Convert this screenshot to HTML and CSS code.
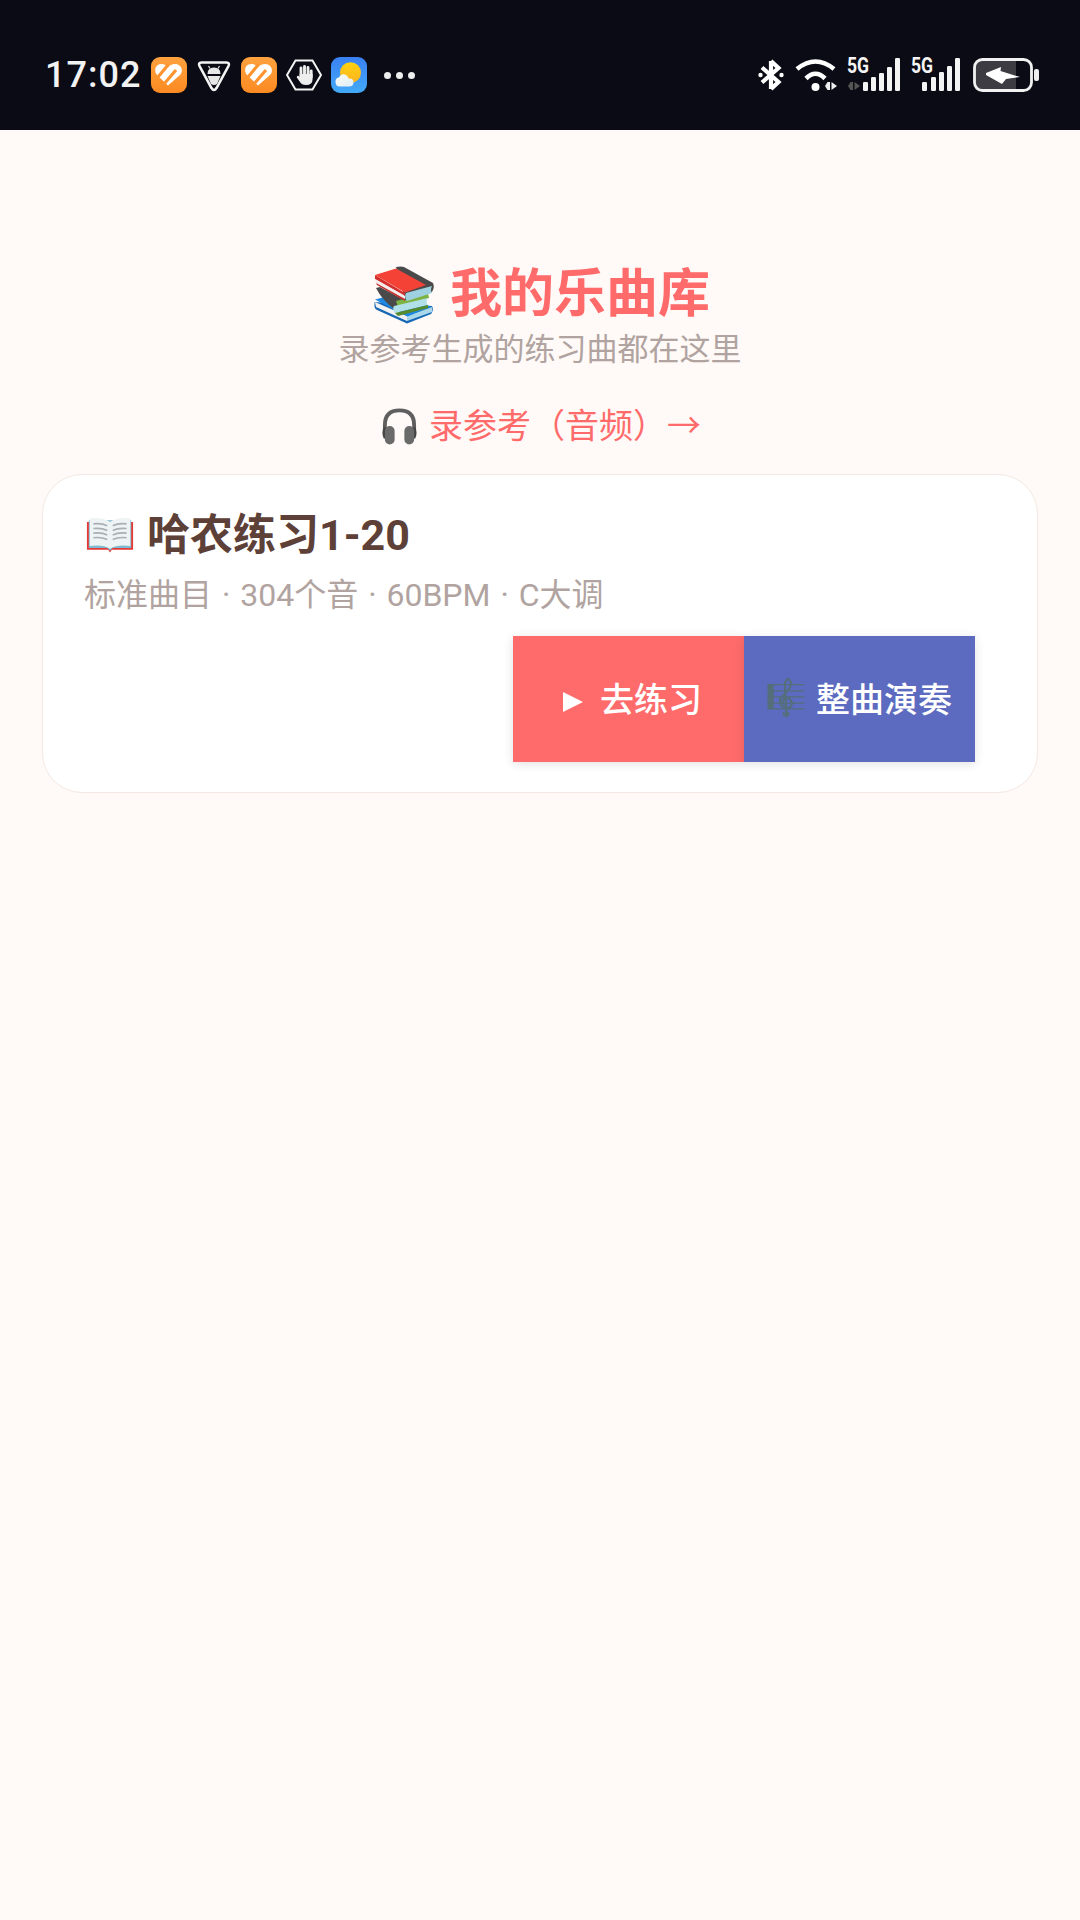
FILE: index.html
```html
<!DOCTYPE html>
<html lang="zh-CN">
<head>
  <meta charset="UTF-8" />
  <meta name="viewport" content="width=device-width, initial-scale=1" />
  <title>我的乐曲库</title>
  <link rel="stylesheet" href="styles.css">
</head>
<body>
  <div class="statusbar">
    <div class="status-left">
      <span class="clock">17:02</span>
      <svg class="app-icon" viewBox="0 0 36 36">
        <defs>
          <linearGradient id="orange" x1="0" y1="0" x2="0" y2="1"><stop offset="0" stop-color="#ffa23f"/><stop offset="1" stop-color="#fb8a22"/></linearGradient>
        </defs>
        <rect width="36" height="36" rx="9" fill="url(#orange)"/>
        <path d="M17 28.500 L6 18 C2.500 14 4 7 10.500 7 C13.500 7 15.500 8.500 17 10.500 C18.500 8.500 21 7 24 7 C30.500 7 33 14 29 18 Z" fill="#fff"/>
        <path d="M7 20 L17 8 M13 27 L25 13" stroke="#fd9430" stroke-width="3.200" fill="none"/>
      </svg>
      <svg class="app-icon" viewBox="0 0 36 36">
        <path d="M5.500 5.500 H30.500 Q34 5.500 32.500 9 L20.500 31 Q18 35 15.500 31 L3.500 9 Q2 5.500 5.500 5.500 Z" fill="none" stroke="#f4f4f4" stroke-width="2.600"/>
        <path d="M11.500 17 Q11.500 10.500 18 10.500 Q24.500 10.500 24.500 17 Z" fill="#e8e8e8"/>
        <path d="M14 11.500 L12.500 9 M22 11.500 L23.500 9" stroke="#e8e8e8" stroke-width="1.200"/>
        <path d="M11.500 19 H24.500 L21 27 Q18 29 15 27 Z" fill="#e8e8e8"/>
      </svg>
      <svg class="app-icon" viewBox="0 0 36 36">
        <rect width="36" height="36" rx="9" fill="url(#orange)"/>
        <path d="M17 28.500 L6 18 C2.500 14 4 7 10.500 7 C13.500 7 15.500 8.500 17 10.500 C18.500 8.500 21 7 24 7 C30.500 7 33 14 29 18 Z" fill="#fff"/>
        <path d="M7 20 L17 8 M13 27 L25 13" stroke="#fd9430" stroke-width="3.200" fill="none"/>
      </svg>
      <svg class="app-icon" viewBox="0 0 36 36">
        <path d="M9.500 3.500 H26.500 L35 18 L26.500 32.500 H9.500 L1 18 Z" fill="none" stroke="#f4f4f4" stroke-width="2"/>
        <path d="M15 19 V11 M18.500 19 V9.500 M22 19 V10.500 M25.200 20 V14" stroke="#eee" stroke-width="2.900" stroke-linecap="round" fill="none"/>
        <path d="M13.600 17 H26.600 V22 Q26.600 28 20 28 Q15.500 28 14 25 L10.800 20.500 Q10.500 18.800 12 18.800 Q13 18.800 13.600 20 Z" fill="#eee"/>
      </svg>
      <svg class="app-icon" viewBox="0 0 36 36">
        <defs>
          <linearGradient id="sky" x1="0" y1="0" x2="0" y2="1"><stop offset="0" stop-color="#3a80f3"/><stop offset="1" stop-color="#43aaf8"/></linearGradient>
          <linearGradient id="sun" x1="0" y1="0" x2="0" y2="1"><stop offset="0" stop-color="#ffd20f"/><stop offset="1" stop-color="#fcb322"/></linearGradient>
          <linearGradient id="cloud" x1="0" y1="0" x2="1" y2="1"><stop offset="0" stop-color="#fbfbf0"/><stop offset="1" stop-color="#dfeefa"/></linearGradient>
        </defs>
        <rect width="36" height="36" rx="9" fill="url(#sky)"/>
        <circle cx="19.500" cy="15.700" r="10.500" fill="url(#sun)"/>
        <path d="M9 29.500 Q4 29.500 4.500 24 Q5 20.500 8 20.500 Q10 16.500 14 17.500 Q17 18.500 17.500 21.500 Q22.500 21 22.500 25.500 Q22.500 29.500 18 29.500 Z" fill="url(#cloud)"/>
      </svg>
      <span class="more"><i></i><i></i><i></i></span>
    </div>
    <div class="status-right">
      <svg class="ic-bt" viewBox="0 0 26 34">
        <path d="M13 3 L20.500 10 L4 24.500 M13 31 L20.500 24 L4 9.500 M13 3 V31" fill="none" stroke="#fff" stroke-width="4.200"/>
        <circle cx="2.500" cy="17" r="2.200" fill="#fff"/>
        <circle cx="23.500" cy="17" r="2.200" fill="#fff"/>
      </svg>
      <svg class="ic-wifi" viewBox="0 0 42 34">
        <path d="M2 11 Q20.500 -4 39 11" fill="none" stroke="#fff" stroke-width="4.600"/>
        <path d="M11 20.500 Q20.500 11 30 20.500" fill="none" stroke="#fff" stroke-width="4.600"/>
        <circle cx="20.500" cy="29" r="4" fill="#fff"/>
        <path d="M32.500 24 V32 H35 V24 Z M36.500 24 V32 L42 28 Z M30 28 L32.500 24 V32 Z" fill="#eee"/>
      </svg>
      <span class="signal">
        <b class="net">5G</b>
        <svg viewBox="0 0 54 34">
          <path d="M4.500 24 V32 H7 V24 Z M8.500 24 V32 L14 28 Z M2 28 L4.500 24 V32 Z" fill="#555"/>
          <rect x="17" y="24" width="5" height="9" rx="1.200" fill="#f4f4f4"/>
          <rect x="25" y="19" width="5" height="14" rx="1.200" fill="#f4f4f4"/>
          <rect x="33" y="15" width="5" height="18" rx="1.200" fill="#f4f4f4"/>
          <rect x="41" y="9" width="5" height="24" rx="1.200" fill="#f4f4f4"/>
          <rect x="49" y="0" width="5" height="33" rx="1.200" fill="#f4f4f4"/>
        </svg>
      </span>
      <span class="signal signal-two">
        <b class="net">5G</b>
        <svg viewBox="0 0 50 34">
          <rect x="12" y="24" width="5" height="9" rx="1.200" fill="#f4f4f4"/>
          <rect x="21" y="19" width="5" height="14" rx="1.200" fill="#f4f4f4"/>
          <rect x="29" y="14" width="5" height="19" rx="1.200" fill="#f4f4f4"/>
          <rect x="37" y="8" width="5" height="25" rx="1.200" fill="#f4f4f4"/>
          <rect x="45" y="0" width="5" height="33" rx="1.200" fill="#f4f4f4"/>
        </svg>
      </span>
      <svg class="ic-batt" viewBox="0 0 66 34">
        <rect x="1.500" y="1.500" width="57" height="31" rx="8" fill="#3c3c42"/>
        <path d="M43 1.500 H50 Q58.500 1.500 58.500 10 V24 Q58.500 32.500 50 32.500 H43 Z" fill="#0a0b14"/>
        <rect x="1.500" y="1.500" width="57" height="31" rx="8" fill="none" stroke="#f1f1f1" stroke-width="2.800"/>
        <rect x="61" y="11" width="5" height="12" rx="2" fill="#eee"/>
        <path d="M13 15 L28 9 L27.500 13 L47 19 L33 21 L29 26 L13 17 Z" fill="#fff"/>
      </svg>
    </div>
  </div>

  <main class="page">
    <header class="page-head">
      <h1 class="page-title">
        <svg class="emoji-books" viewBox="0 0 60 58">
          <path d="M0.500 36 V41 Q1 43 3 44 L33 57.500 L57 48 Q60 44 58 40 Z" fill="#1668b5"/>
          <path d="M1 36 L33 50 V55 L2 41 Z" fill="#f1f1f1"/>
          <path d="M33 50 L58 41 V46 L33 55 Z" fill="#a8d8ea"/>
          <path d="M1 33.500 L14.500 30 L57.500 40.500 L33.500 50.500 Z" fill="#1e88e5"/>
          <path d="M2 22 L6 21 L32 35 L20 43 Q8 34 2 22 Z" fill="#4a4a4a"/>
          <path d="M22 35 L54 27 L55 32 L24 41 Z" fill="#7cb342"/>
          <path d="M20 40 L54 32 Q51 36 54 39 L21 47 Q18 43 20 40 Z" fill="#b2e0e8"/>
          <path d="M21 47 L54 39 V42 L24 50 Z" fill="#558b2f"/>
          <path d="M22 1 Q27 0 30 1 L59 17 Q61 22 58 26 L31 34 L26 14 Z" fill="#4a4a4a"/>
          <path d="M32 27 L58 20 Q56 24 58 27 L33 35 Q30 31 32 27 Z" fill="#9fd0df"/>
          <path d="M1 9 L31 27 V30 L1 13 Z" fill="#d32f2f"/>
          <path d="M1 13 L31 30 V33 L2 17 Z" fill="#f1eded"/>
          <path d="M2 17 L31 33 V35 L3 19 Z" fill="#c62828"/>
          <path d="M1 9 L22 2.500 L52 19 L31 26.500 Z" fill="#f44336"/>
        </svg>
        <span>我的乐曲库</span>
      </h1>
      <p class="page-sub">录参考生成的练习曲都在这里</p>
      <a class="record-link" href="#">
        <svg class="emoji-phones" viewBox="0 0 38 38">
          <path d="M4 24 V18 Q4 3 19 3 Q34 3 34 18 V24" fill="none" stroke="#5f5f5f" stroke-width="4"/>
          <path d="M3 20 Q0 26 3 32 L6 31 V21 Z M35 20 Q38 26 35 32 L32 31 V21 Z" fill="#444"/>
          <rect x="4" y="19" width="10" height="19" rx="5" fill="#6a6a6a"/>
          <rect x="24" y="19" width="10" height="19" rx="5" fill="#6a6a6a"/>
        </svg>
        <span>录参考（音频）→</span>
      </a>
    </header>

    <section class="song-card">
      <h2 class="song-title">
        <svg class="emoji-book" viewBox="0 0 52 38">
          <path d="M1 5 V35 L24 35 L26 38 L28 35 L51 35 V5 Z" fill="#e53935"/>
          <path d="M3 3 V33 H23 L26 36 L29 33 H49 V3 Z" fill="#7fb9cf"/>
          <path d="M4 1 Q18 -1 26 5 Q34 -1 48 1 V31 Q34 29 26 34 Q18 29 4 31 Z" fill="#eef3f4"/>
          <path d="M8 7 Q17 6 23 9 M8 12 Q17 11 23 14 M8 17 Q17 16 23 19 M8 22 Q17 21 23 24 M44 7 Q35 6 29 9 M44 12 Q35 11 29 14 M44 17 Q35 16 29 19 M44 22 Q35 21 29 24" fill="none" stroke="#a9afb2" stroke-width="1.800"/>
        </svg>
        <span>哈农练习1-20</span>
      </h2>
      <p class="song-meta">标准曲目 · 304个音 · 60BPM · C大调</p>
      <div class="song-actions">
        <button class="btn btn-practice"><svg class="ic-play" viewBox="0 0 20 20"><path d="M0 0 L20 10 L0 20 Z" fill="#fff"/></svg>去练习</button>
        <button class="btn btn-play">
          <svg class="emoji-score" viewBox="0 0 36 38">
            <rect x="0" y="6" width="6" height="24" fill="#546e7a"/>
            <path d="M0 6.500 H36 M0 12.500 H36 M0 18.500 H36 M0 24.500 H36 M0 30 H36" stroke="#546e7a" stroke-width="1.200" fill="none"/>
            <path d="M20 33 Q21 37 18 37 Q14.500 36.500 16 33.500 M18.500 37 L17 8 Q17 1 20.500 1 Q24 3 22 9 Q19 14 14 18 Q10 23 13.500 27 Q18 31 23 27.500 Q25.500 23 21 20 Q16 18.500 14.500 23 Q15 26 18 26" fill="none" stroke="#546e7a" stroke-width="2"/>
          </svg>整曲演奏
        </button>
      </div>
    </section>
  </main>
</body>
</html>
```

FILE: styles.css
```css
* {
  box-sizing: border-box;
}

body {
  margin: 0;
  min-height: 1920px;
  background: #fffaf7;
  font-family: Roboto, 'Noto Sans CJK SC', sans-serif;
  color: #333;
}

/* status bar */
.statusbar {
  height: 130px;
  padding: 20px 41px 0 45px;
  background: #0a0b14;
  display: flex;
  justify-content: space-between;
  align-items: center;
}

.status-left,
.status-right {
  display: flex;
  align-items: center;
}

.clock {
  width: 106px;
  color: #f2f2f2;
  font-size: 36px;
  font-weight: 500;
  letter-spacing: 1px;
}

.app-icon {
  width: 36px;
  height: 36px;
  margin-right: 9px;
}

.more {
  display: flex;
  gap: 5px;
  margin-left: 8px;
}

.more i {
  width: 7px;
  height: 7px;
  border-radius: 50%;
  background: #eee;
}

.ic-bt {
  width: 26px;
  height: 34px;
  margin-right: 11px;
}

.ic-wifi {
  width: 42px;
  height: 34px;
  margin-right: 9px;
}

.signal {
  position: relative;
  display: block;
  width: 54px;
  height: 34px;
  margin-right: 10px;
}

.signal svg {
  display: block;
  width: 100%;
  height: 100%;
}

.signal-two {
  width: 50px;
  margin-right: 13px;
}

.net {
  position: absolute;
  left: 1px;
  top: -2px;
  color: #f4f4f4;
  font-family: Roboto, sans-serif;
  font-size: 22px;
  font-weight: 700;
  line-height: 20px;
  transform: scaleX(0.8);
  transform-origin: left center;
}

.ic-batt {
  width: 66px;
  height: 34px;
}

/* page header */
.page {
  padding: 133px 42px 0;
}

.page-head {
  text-align: center;
}

.page-title {
  margin: 0;
  height: 64px;
  padding-left: 4px;
  display: flex;
  justify-content: center;
  align-items: center;
  gap: 16px;
  color: #ff6b6b;
  font-size: 52px;
  font-weight: 700;
  line-height: 64px;
}

.emoji-books {
  width: 60px;
  height: 58px;
}

.page-sub {
  margin: -1px 0 0;
  color: #b0a3a0;
  font-size: 31px;
  line-height: 48px;
}

.record-link {
  margin-top: 28px;
  height: 48px;
  padding-left: 2px;
  display: flex;
  justify-content: center;
  align-items: center;
  gap: 11px;
  color: #ff6b6b;
  font-size: 34px;
  line-height: 48px;
  text-decoration: none;
}

.emoji-phones {
  width: 37px;
  height: 38px;
}

/* card */
.song-card {
  margin-top: 24px;
  height: 319px;
  padding: 30px 62px 30px 41px;
  background: #fff;
  border: 1px solid #f3e8e2;
  border-radius: 40px;
}

.song-title {
  margin: 0;
  height: 60px;
  display: flex;
  align-items: center;
  gap: 13px;
  color: #5d4037;
  font-size: 43px;
  font-weight: 700;
  line-height: 60px;
}

.emoji-book {
  width: 48px;
  height: 36px;
  margin-left: 2px;
}

.song-meta {
  margin: 0;
  color: #b0a3a0;
  font-size: 32px;
  line-height: 60px;
  word-spacing: 2px;
}

.song-actions {
  margin-top: 11px;
  display: flex;
  justify-content: flex-end;
}

.btn {
  width: 231px;
  height: 126px;
  padding: 0 0 3px;
  border: 0;
  color: #fff;
  font-family: inherit;
  font-size: 34px;
  font-weight: 500;
  display: flex;
  justify-content: center;
  align-items: center;
  box-shadow: 0 2px 10px rgba(0, 0, 0, 0.12);
}

.btn-practice {
  padding-left: 8px;
  background: #ff6b6b;
  gap: 17px;
}

.btn-play {
  background: #5c6bc0;
  gap: 11px;
}

.ic-play {
  width: 20px;
  height: 20px;
  margin-top: 8px;
}

.emoji-score {
  width: 38px;
  height: 39px;
}
```
